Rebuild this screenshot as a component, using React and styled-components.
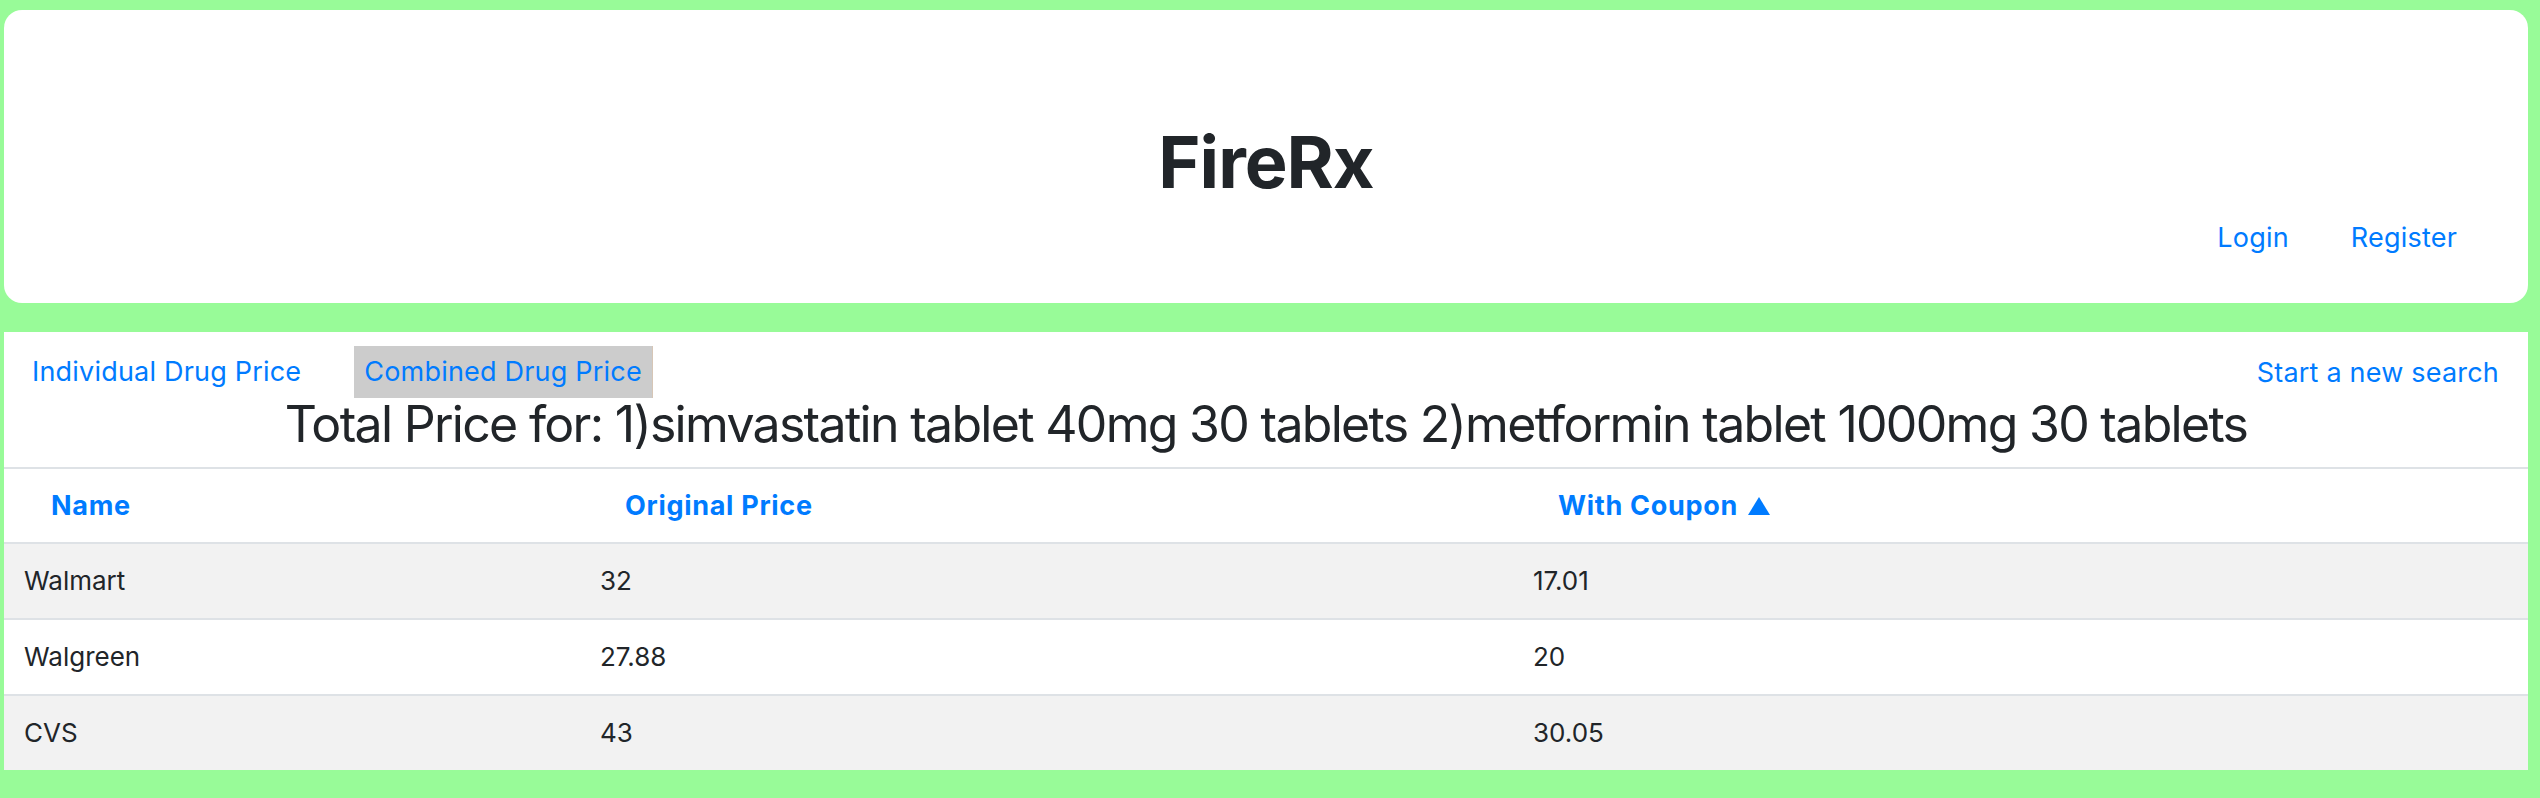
import React from 'react'
import styled, { createGlobalStyle } from 'styled-components'

const GlobalStyle = createGlobalStyle`
  html, body { margin: 0; padding: 0; }
  body {
    background: #98fb98;
    font-family: Inter, "Noto Sans", "Liberation Sans", sans-serif;
    color: #212529;
  }
`

const Page = styled.div`
  display: flex;
  flex-direction: column;
  gap: 29px;
  padding: 10px 12px 28px 4px;
`

const HeaderCard = styled.header`
  background: #fff;
  border-radius: 18px;
  height: 293px;
  box-sizing: border-box;
  padding-top: 116px;
  display: flex;
  flex-direction: column;
`

const Title = styled.h1`
  margin: 0;
  text-align: center;
  font-size: 72px;
  line-height: 1;
  font-weight: 700;
  letter-spacing: -1px;
`

const AuthNav = styled.nav`
  margin-top: 26px;
  display: flex;
  justify-content: flex-end;
  gap: 62px;
  padding-right: 71px;
`

const Link = styled.a`
  color: #007bff;
  font-size: 27px;
  line-height: 1;
  text-decoration: none;
  cursor: pointer;
  letter-spacing: 0.2px;
`

const ResultCard = styled.section`
  background: #fff;
  padding-top: 14px;
`

const TabRow = styled.div`
  display: flex;
  align-items: center;
  justify-content: space-between;
  padding: 0 29px 0 28px;
`

const Tabs = styled.div`
  display: flex;
  align-items: center;
  gap: 53px;
`

const Tab = styled(Link)`
  display: block;
  padding: 12px ${p => (p.$active ? '10px' : '0')} 13px;
  background: ${p => (p.$active ? '#cccccc' : 'transparent')};
  border-right: ${p => (p.$active ? '1px solid #d6c6b6' : 'none')};
`

const Heading = styled.h2`
  margin: 1px 0 0;
  padding-bottom: 18px;
  border-bottom: 2px solid #dee2e6;
  text-align: center;
  font-size: 50px;
  line-height: 1;
  font-weight: 400;
  letter-spacing: -1.7px;
`

const Row = styled.div`
  display: grid;
  grid-template-columns: 576px 933px 1fr;
  align-items: center;
  height: ${p => (p.$head ? '73px' : '74px')};
  background: ${p => (p.$striped ? '#f2f2f2' : '#fff')};
  border-top: ${p => (p.$divider ? '2px solid #dee2e6' : 'none')};
  border-bottom: ${p => (p.$head ? '2px solid #dee2e6' : 'none')};
`

const HeadCell = styled.div`
  padding-left: ${p => (p.$first ? '47px' : '45px')};
  color: #007bff;
  font-size: 27px;
  line-height: 1;
  font-weight: 700;
  letter-spacing: 0.7px;
  display: flex;
  align-items: center;
  gap: 10px;
`

const Cell = styled.div`
  padding-left: 20px;
  font-size: 26px;
  line-height: 1;
`

const SortUp = () => (
  <svg width="22" height="18" viewBox="0 0 22 18" aria-hidden="true">
    <polygon points="11,0 22,18 0,18" fill="#007bff" />
  </svg>
)

const rows = [
  { name: 'Walmart', original: '32', coupon: '17.01' },
  { name: 'Walgreen', original: '27.88', coupon: '20' },
  { name: 'CVS', original: '43', coupon: '30.05' }
]

export default function App() {
  return (
    <>
      <GlobalStyle />
      <Page>
        <HeaderCard>
          <Title>FireRx</Title>
          <AuthNav>
            <Link>Login</Link>
            <Link>Register</Link>
          </AuthNav>
        </HeaderCard>

        <ResultCard>
          <TabRow>
            <Tabs>
              <Tab>Individual Drug Price</Tab>
              <Tab $active>Combined Drug Price</Tab>
            </Tabs>
            <Link>Start a new search</Link>
          </TabRow>
          <Heading>
            Total Price for: 1)simvastatin tablet 40mg 30 tablets 2)metformin tablet 1000mg 30 tablets
          </Heading>
          <Row $head>
            <HeadCell $first>Name</HeadCell>
            <HeadCell>Original Price</HeadCell>
            <HeadCell>With Coupon <SortUp /></HeadCell>
          </Row>
          {rows.map((r, i) => (
            <Row key={r.name} $striped={i % 2 === 0} $divider={i > 0}>
              <Cell>{r.name}</Cell>
              <Cell>{r.original}</Cell>
              <Cell>{r.coupon}</Cell>
            </Row>
          ))}
        </ResultCard>
      </Page>
    </>
  )
}
